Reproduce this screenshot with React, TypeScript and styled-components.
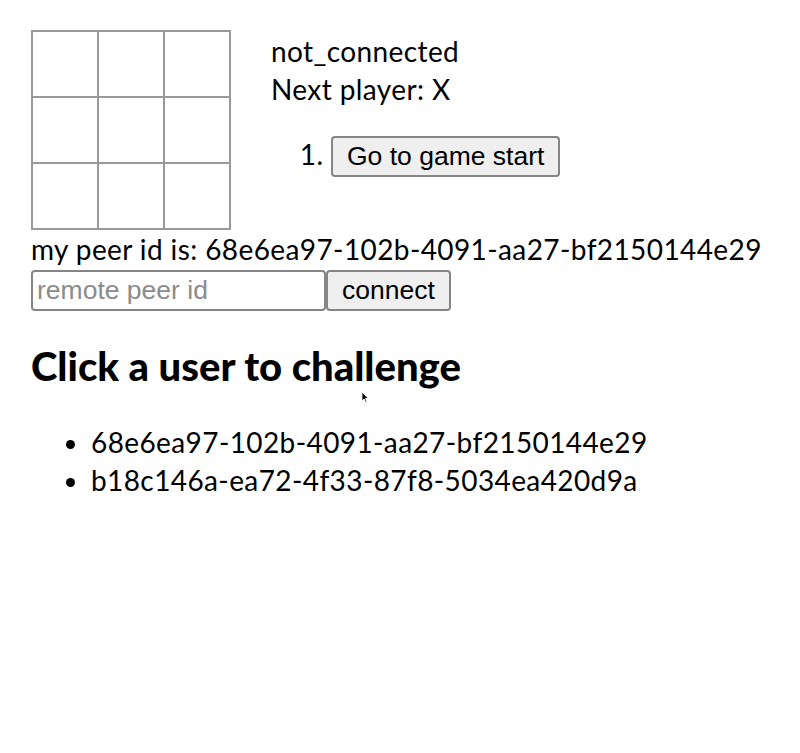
import React from 'react';
import styled, { createGlobalStyle } from 'styled-components';

const GlobalStyle = createGlobalStyle`
  html, body {
    margin: 0;
    background: #ffffff;
  }
  body {
    font-family: Lato, "Noto Sans", sans-serif;
    color: #000000;
  }
`;

const Page = styled.div`
  position: relative;
  padding: 30px 31px;
  font-size: 28px;
  letter-spacing: 0.4px;
  line-height: 38px;
`;

const Game = styled.div`
  display: flex;
  flex-direction: row;
  align-items: flex-start;
`;

const Board = styled.div`
  display: grid;
  grid-template-columns: repeat(3, 64px);
  grid-template-rows: repeat(3, 64px);
  gap: 2px;
  padding: 2px;
  background: #999999;
`;

const Square = styled.button`
  background: #ffffff;
  border: none;
  padding: 0;
  margin: 0;
`;

const GameInfo = styled.div`
  margin-left: 40px;
  padding-top: 2px;
`;

const Moves = styled.ol`
  margin: 26px 0 0;
  padding-left: 60px;
`;

const Move = styled.li`
  line-height: 41px;
`;

const NativeButton = styled.button`
  font-family: "Liberation Sans", Arial, sans-serif;
  font-size: 26.5px;
  letter-spacing: 0;
  height: 41px;
  padding: 0 14px;
  background: #efefef;
  color: #000000;
  border: 2px solid #858585;
  border-radius: 4px;
`;

const PeerId = styled.div`
  margin-top: 0;
`;

const ConnectRow = styled.div`
  display: flex;
  flex-direction: row;
  margin-top: 2px;
`;

const PeerInput = styled.input`
  box-sizing: border-box;
  width: 295px;
  height: 41px;
  font-family: "Liberation Sans", Arial, sans-serif;
  font-size: 26.5px;
  padding: 0 4px;
  border: 2px solid #858585;
  border-radius: 4px;
  &::placeholder {
    color: #8b8b8b;
  }
`;

const ConnectButton = styled(NativeButton)`
  width: 125px;
  padding: 0;
`;

const Heading = styled.h2`
  font-size: 40px;
  font-weight: 900;
  letter-spacing: 0;
  line-height: 48px;
  margin: 31px 0 0;
`;

const UserList = styled.ul`
  margin: 33px 0 0;
  padding-left: 60px;
`;

const User = styled.li`
  cursor: pointer;
`;

const Cursor = styled.svg`
  position: absolute;
  left: 361px;
  top: 391px;
`;

const users = [
  '68e6ea97-102b-4091-aa27-bf2150144e29',
  'b18c146a-ea72-4f33-87f8-5034ea420d9a',
];

export default function App() {
  return (
    <>
      <GlobalStyle />
      <Page>
        <Game>
          <Board>
            {Array.from({ length: 9 }).map((_, i) => (
              <Square key={i} />
            ))}
          </Board>
          <GameInfo>
            <div>not_connected</div>
            <div>Next player: X</div>
            <Moves>
              <Move>
                <NativeButton>Go to game start</NativeButton>
              </Move>
            </Moves>
          </GameInfo>
        </Game>
        <PeerId>my peer id is: 68e6ea97-102b-4091-aa27-bf2150144e29</PeerId>
        <ConnectRow>
          <PeerInput placeholder="remote peer id" />
          <ConnectButton>connect</ConnectButton>
        </ConnectRow>
        <Heading>Click a user to challenge</Heading>
        <UserList>
          {users.map((u) => (
            <User key={u}>{u}</User>
          ))}
        </UserList>
        <Cursor width="8" height="12" viewBox="0 0 8 12">
          <path d="M1 1 L1 10 L3.2 8 L4.8 11.5 L6 11 L4.5 7.5 L7.2 7.5 Z" fill="#000" stroke="#fff" strokeWidth="0.8" />
        </Cursor>
      </Page>
    </>
  );
}
